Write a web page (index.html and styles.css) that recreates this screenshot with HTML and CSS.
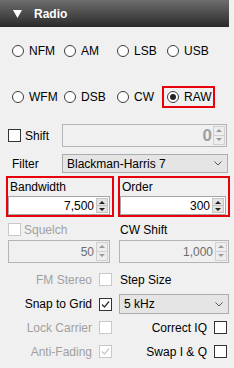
FILE: index.html
```html
<!DOCTYPE html>
<html>
<head>
<meta charset="utf-8">
<link rel="stylesheet" href="styles.css">
</head>
<body>
<div class="panel">
  <div class="header">
    <svg class="tri" width="9" height="8" viewBox="0 0 9 8"><path d="M0 0H9L4.5 8Z" fill="#fff"/></svg>
    <span class="title">Radio</span>
  </div>

  <div class="modes first">
    <label class="radio"><span class="rb"></span><span>NFM</span></label>
    <label class="radio"><span class="rb"></span><span>AM</span></label>
    <label class="radio"><span class="rb"></span><span>LSB</span></label>
    <label class="radio"><span class="rb"></span><span>USB</span></label>
  </div>
  <div class="modes second">
    <label class="radio"><span class="rb"></span><span>WFM</span></label>
    <label class="radio"><span class="rb"></span><span>DSB</span></label>
    <label class="radio"><span class="rb"></span><span>CW</span></label>
    <label class="radio selected hl"><span class="rb"></span><span>RAW</span></label>
  </div>

  <div class="shift-row">
    <label class="check"><span class="cb"></span><span>Shift</span></label>
    <div class="num disabled big"><span class="val">0</span><span class="spin"><span class="up"></span><span class="down"></span></span></div>
  </div>

  <div class="filter-row">
    <span class="lbl">Filter</span>
    <div class="select"><span>Blackman-Harris 7</span><svg class="chev" width="8" height="5" viewBox="0 0 8 5"><path d="M0.5 0.5L4 4L7.5 0.5" fill="none" stroke="#555" stroke-width="1"/></svg></div>
  </div>

  <div class="pair bw">
    <div class="group hl left">
      <div class="glabel">Bandwidth</div>
      <div class="num"><span class="val">7,500</span><span class="spin"><span class="up"></span><span class="down"></span></span></div>
    </div>
    <div class="group hl right">
      <div class="glabel">Order</div>
      <div class="num"><span class="val">300</span><span class="spin"><span class="up"></span><span class="down"></span></span></div>
    </div>
  </div>

  <div class="pair row-sq">
    <label class="check disabled"><span class="cb"></span><span>Squelch</span></label>
    <span class="rlbl">CW Shift</span>
  </div>

  <div class="pair row-num">
    <div class="num disabled lnum"><span class="val">50</span><span class="spin"><span class="up"></span><span class="down"></span></span></div>
    <div class="num disabled rnum"><span class="val">1,000</span><span class="spin"><span class="up"></span><span class="down"></span></span></div>
  </div>

  <div class="pair row-fm">
    <div class="rcheck disabled"><span>FM Stereo</span><span class="cb"></span></div>
    <span class="rlbl">Step Size</span>
  </div>

  <div class="pair row-snap">
    <div class="rcheck"><span>Snap to Grid</span><span class="cb checked"><svg width="11" height="11" viewBox="0 0 11 11"><path d="M2 5.5L4.5 8L9 2.5" fill="none" stroke="#333" stroke-width="1.3"/></svg></span></div>
    <div class="select small"><span>5 kHz</span><svg class="chev" width="8" height="5" viewBox="0 0 8 5"><path d="M0.5 0.5L4 4L7.5 0.5" fill="none" stroke="#555" stroke-width="1"/></svg></div>
  </div>

  <div class="pair row-lock">
    <div class="rcheck disabled"><span>Lock Carrier</span><span class="cb"></span></div>
    <div class="rcheck right"><span>Correct IQ</span><span class="cb"></span></div>
  </div>

  <div class="pair row-anti">
    <div class="rcheck disabled"><span>Anti-Fading</span><span class="cb checked"><svg width="11" height="11" viewBox="0 0 11 11"><path d="M2 5.5L4.5 8L9 2.5" fill="none" stroke="#c8c8c8" stroke-width="1.2"/></svg></span></div>
    <div class="rcheck right"><span>Swap I &amp; Q</span><span class="cb"></span></div>
  </div>
</div>
</body>
</html>
```

FILE: styles.css
```css
* { box-sizing: border-box; }
html, body {
  margin: 0;
  padding: 0;
  background: #f0f0f0;
}
body {
  width: 234px;
  height: 368px;
  overflow: hidden;
  font-family: "Liberation Sans", Arial, sans-serif;
  font-size: 12px;
  color: #000;
}
.panel { width: 234px; }

.header {
  height: 27px;
  width: 229px;
  background: linear-gradient(#6e6e6e, #2a2a2a);
  color: #fff;
  display: flex;
  align-items: center;
}
.tri { margin-left: 13px; }
.title {
  margin-left: 12px;
  font-weight: bold;
  font-size: 12px;
}

.modes {
  display: grid;
  grid-template-columns: 52px 53px 50px 60px;
  padding-left: 12px;
  height: 12px;
  align-items: center;
}
.modes.first { margin-top: 18px; }
.modes.second { margin-top: 34px; }

.radio {
  display: flex;
  align-items: center;
  height: 12px;
  white-space: nowrap;
}
.rb {
  width: 12px;
  height: 12px;
  border: 1px solid #3c3c3c;
  border-radius: 50%;
  background: #fff;
  margin-right: 5px;
  flex: none;
  position: relative;
}
.radio.selected .rb::after {
  content: "";
  position: absolute;
  left: 2px;
  top: 2px;
  width: 6px;
  height: 6px;
  border-radius: 50%;
  background: #222;
}
.hl {
  outline: 2px solid #e8000b;
}
.radio.hl {
  outline-offset: 3px;
  width: 43px;
}

.cb {
  width: 13px;
  height: 13px;
  border: 1px solid #333;
  background: #fff;
  flex: none;
  display: flex;
  align-items: center;
  justify-content: center;
}
.disabled .cb { border-color: #c8c8c8; }
.disabled { color: #a0a0a0; }

.check {
  display: flex;
  align-items: center;
  white-space: nowrap;
}
.check .cb { margin-right: 4px; }

.shift-row {
  display: flex;
  align-items: center;
  padding-left: 8px;
  margin-top: 21px;
  height: 23px;
}
.shift-row .check { width: 54px; }
.shift-row .num { width: 165px; height: 23px; }

.num {
  display: flex;
  align-items: stretch;
  border: 1px solid #a5a5a5;
  background: #fff;
  color: #000;
}
.num.disabled { background: #f0f0f0; color: #6d6d6d; border-color: #b4b4b4; }
.num .val {
  flex: 1;
  text-align: right;
  display: flex;
  align-items: center;
  justify-content: flex-end;
  padding-right: 2px;
}
.num.big .val {
  font-size: 17px;
  font-weight: bold;
  color: #a0a0a0;
  padding-right: 1px;
}
.spin {
  width: 12px;
  margin: 1px 1px 1px 0;
  display: flex;
  flex-direction: column;
}
.spin span {
  flex: 1;
  position: relative;
  background: #e4e4e4;
  border: 1px solid #c4c4c4;
}
.spin .down { border-top: none; }
.spin span::after {
  content: "";
  position: absolute;
  left: 2px;
  border-left: 3px solid transparent;
  border-right: 3px solid transparent;
}
.spin .up::after {
  top: 2px;
  border-bottom: 3px solid #222;
}
.spin .down::after {
  top: 2px;
  border-top: 3px solid #222;
}
.disabled .spin span { background: #ededed; border-color: #d0d0d0; }
.disabled .spin .up::after { border-bottom-color: #9a9a9a; }
.disabled .spin .down::after { border-top-color: #9a9a9a; }

.filter-row {
  display: flex;
  align-items: center;
  margin-top: 7px;
  height: 19px;
}
.filter-row .lbl { width: 62px; padding-left: 12px; }
.select {
  display: flex;
  align-items: center;
  justify-content: space-between;
  height: 19px;
  width: 166px;
  border: 1px solid #acacac;
  background: #e5e5e5;
  padding: 0 5px 0 4px;
  white-space: nowrap;
}

.pair {
  display: grid;
  grid-template-columns: 104px 110px;
  column-gap: 7px;
  padding-left: 8px;
  align-items: center;
}
.bw { margin-top: 5px; align-items: start; }
.group { height: 37px; display: flex; flex-direction: column; }
.group.left { width: 104px; }
.group.right { width: 108px; margin-left: 1px; }
.glabel { height: 18px; padding-left: 2px; display: flex; align-items: center; }
.group .num { height: 19px; width: 102px; }
.group.right .num { width: 106px; }

.row-sq { margin-top: 7px; height: 15px; }
.rlbl { padding-left: 1px; }
.row-sq .check .cb { margin-right: 3px; }

.row-num { margin-top: 3px; height: 23px; }
.lnum { width: 102px; height: 23px; }
.rnum { width: 110px; height: 23px; }

.rcheck {
  display: flex;
  align-items: center;
  justify-content: flex-end;
  white-space: nowrap;
}
.rcheck .cb { margin-left: 7px; }
.rcheck.right { padding-right: 2px; }

.row-fm { margin-top: 9px; height: 15px; }
.row-snap { margin-top: 7px; height: 20px; }
.select.small { width: 110px; height: 20px; }
.row-lock { margin-top: 6px; height: 15px; }
.row-anti { margin-top: 9px; height: 15px; }
```
